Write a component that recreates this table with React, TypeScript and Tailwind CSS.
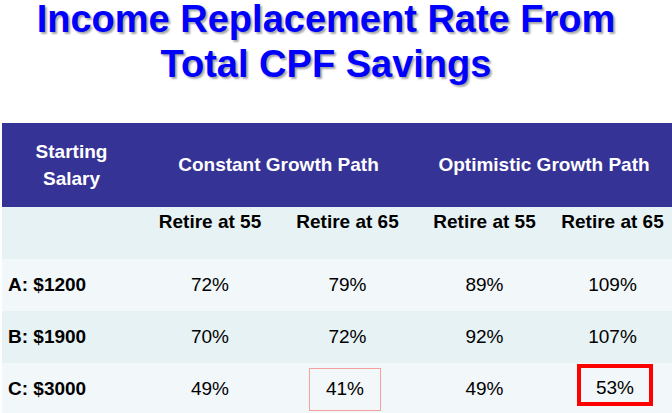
const COLS = 'grid grid-cols-[139px_138px_137px_137px_119px]'

const ROWS = [
  { label: 'A: $1200', values: ['72%', '79%', '89%', '109%'], bg: 'bg-[#f2f7f9]' },
  { label: 'B: $1900', values: ['70%', '72%', '92%', '107%'], bg: 'bg-[#e7f2f4]' },
  { label: 'C: $3000', values: ['49%', '41%', '49%', '53%'], bg: 'bg-[#f2f7f9]' },
]

function ValueCell({ value, row, col }: { value: string; row: number; col: number }) {
  if (row === 2 && col === 1) {
    return (
      <div className="flex items-center justify-center">
        <div className="flex h-[43px] w-[72px] items-center justify-center border-[1.5px] border-[#f7a0a0] mr-[5px]">
          {value}
        </div>
      </div>
    )
  }
  if (row === 2 && col === 3) {
    return (
      <div className="flex items-start justify-start pl-[24px] pt-[1px]">
        <div className="flex h-[42px] w-[76px] items-center justify-center border-4 border-[#ff0000] pt-[6px]">
          {value}
        </div>
      </div>
    )
  }
  return <div className="flex items-center justify-center">{value}</div>
}

export default function App() {
  return (
    <div className="flex h-[413px] w-[672px] flex-col overflow-hidden bg-white font-['Liberation_Sans',Arial,sans-serif]">
      <div className="mb-[36px] pr-[20px] text-center text-[38px] font-bold text-[#0000ff] [text-shadow:2px_2px_2px_rgba(0,0,0,0.35)]">
        <div className="leading-[39px]">Income Replacement Rate From</div>
        <div className="mt-[3px] leading-[45px]">Total CPF Savings</div>
      </div>

      <div className="ml-[2px]">
        <div className={`${COLS} h-[84px] bg-[#363396] text-[19px] font-bold text-white`}>
          <div className="flex items-center justify-center text-center leading-[27px]">
            Starting
            <br />
            Salary
          </div>
          <div className="col-span-2 flex items-center justify-center">Constant Growth Path</div>
          <div className="col-span-2 flex items-center justify-center">Optimistic Growth Path</div>
        </div>

        <div className={`${COLS} h-[52px] bg-[#e7f2f4] text-[19px] font-bold text-black`}>
          <div />
          {['Retire at 55', 'Retire at 65', 'Retire at 55', 'Retire at 65'].map((t, i) => (
            <div key={i} className="pt-[1px] text-center">
              {t}
            </div>
          ))}
        </div>

        {ROWS.map((r, ri) => (
          <div key={r.label} className={`${COLS} h-[52px] ${r.bg} text-[19px] text-black`}>
            <div className="flex items-center pl-[6px] font-bold">{r.label}</div>
            {r.values.map((v, ci) => (
              <ValueCell key={ci} value={v} row={ri} col={ci} />
            ))}
          </div>
        ))}
      </div>
    </div>
  )
}
